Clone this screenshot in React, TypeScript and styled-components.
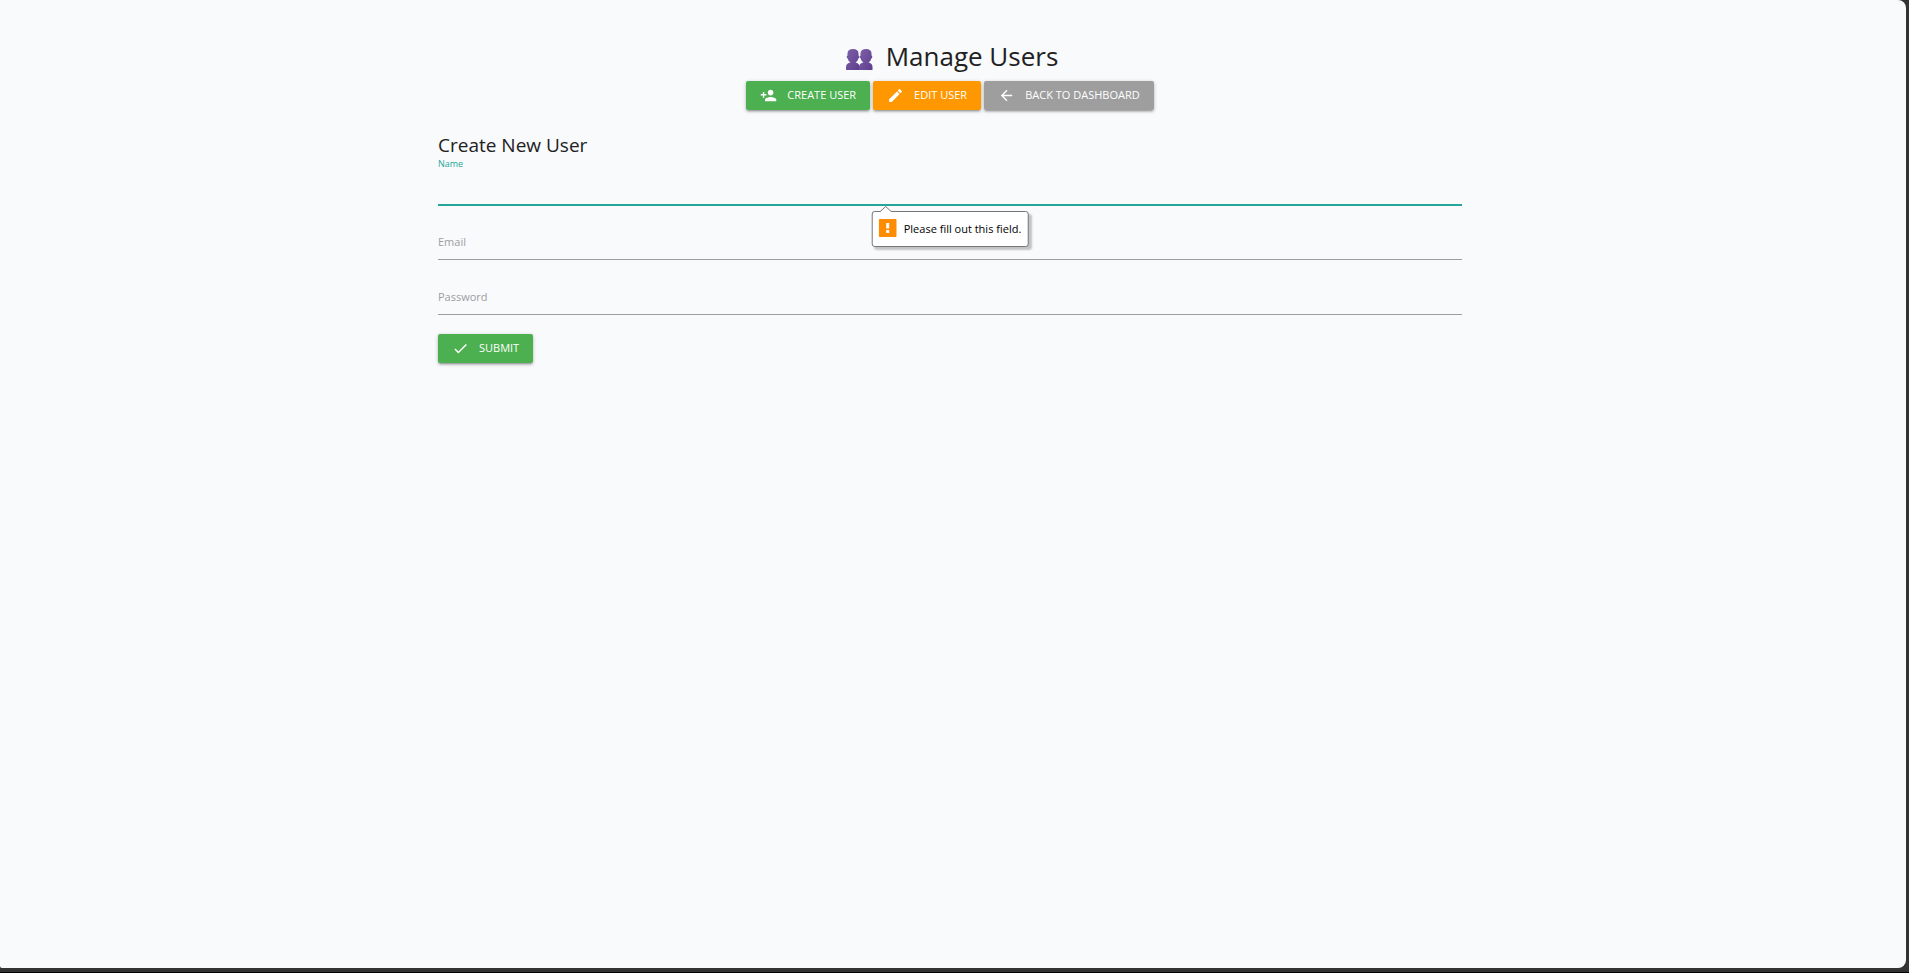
import React from "react";
import styled, { createGlobalStyle, css } from "styled-components";
import { MdPersonAdd, MdEdit, MdArrowBack, MdCheck } from "react-icons/md";

const GlobalStyle = createGlobalStyle`
  *, *::before, *::after { box-sizing: border-box; }
  body {
    margin: 0;
    background: #333333;
    color: #212121;
    font-family: "Open Sans", "Noto Sans", sans-serif;
  }
`;

const Frame = styled.div`
  display: flex;
  min-height: 100vh;
  padding: 0 3px 4px 0;
  border-bottom: 1px solid #000000;
`;

const Page = styled.main`
  flex: 1;
  padding: 40px 6px 40px 0;
  border-radius: 0 8px 8px 2px;
  background: #f8fafc;
`;

const Container = styled.div`
  width: 70%;
  max-width: 1024px;
  margin: 0 auto;
`;

const Title = styled.h1`
  display: flex;
  justify-content: center;
  align-items: center;
  gap: 13px;
  margin: 0 0 9px;
  padding-left: 4px;
  font-size: 26px;
  font-weight: 400;
  line-height: 32px;
`;

const TitleIcon = styled.svg`
  width: 27px;
  height: 21px;
  margin-top: 7px;
`;

const Toolbar = styled.div`
  display: flex;
  flex-wrap: wrap;
  justify-content: center;
  gap: 3px;
`;

const tones = { green: "#4caf50", orange: "#ff9800", grey: "#9e9e9e" };

const Button = styled.button<{ $tone: keyof typeof tones }>`
  display: inline-flex;
  align-items: center;
  gap: 10px;
  height: 29px;
  padding: 0 14px 1px;
  border: 0;
  border-radius: 2px;
  background: ${({ $tone }) => tones[$tone]};
  box-shadow: 0 2px 2px rgba(0, 0, 0, 0.14), 0 3px 1px -2px rgba(0, 0, 0, 0.12),
    0 1px 4px rgba(0, 0, 0, 0.2);
  color: #ffffff;
  font-family: inherit;
  font-size: 11px;
  line-height: 16px;
  text-transform: uppercase;
  cursor: pointer;

  svg {
    width: 17px;
    height: 17px;
  }
`;

const Form = styled.form`
  margin-top: 23px;
`;

const FormTitle = styled.h2`
  margin: 0;
  font-size: 19px;
  font-weight: 400;
  line-height: 24px;
`;

const Label = styled.label`
  font-size: 11px;
  line-height: 16px;
  color: #9e9e9e;
`;

const Input = styled.input`
  width: 100%;
  height: 35px;
  padding: 0;
  border: 0;
  border-bottom: 1px solid #9e9e9e;
  border-radius: 0;
  outline: none;
  background: transparent;
  font-family: inherit;
  font-size: 13px;
`;

const Field = styled.div<{ $active?: boolean }>`
  position: relative;
  display: grid;
  ${({ $active }) =>
    $active
      ? css`
          padding-top: 1px;
          ${Label} {
            font-size: 9px;
            line-height: 12px;
            color: #26a69a;
          }
          ${Input} {
            border-color: #26a69a;
            box-shadow: 0 1px 0 #26a69a;
          }
        `
      : css`
          margin-top: 20px;
          align-items: center;
          ${Label}, ${Input} {
            grid-area: 1 / 1;
          }
          ${Label} {
            padding-bottom: 1px;
            pointer-events: none;
          }
        `}
`;

const Hint = styled.div`
  position: absolute;
  top: calc(100% + 6px);
  left: 50%;
  z-index: 1;
  display: flex;
  align-items: center;
  gap: 7px;
  height: 36px;
  padding: 0 6px;
  border: 1px solid #767676;
  border-radius: 3px;
  background: #ffffff;
  box-shadow: 3px 3px 2px rgba(0, 0, 0, 0.22);
  color: #000000;
  font-size: 11px;
  line-height: 16px;
  white-space: nowrap;
  transform: translateX(-50%);
`;

const HintArrow = styled.svg`
  position: absolute;
  top: -6px;
  left: 7px;
  width: 12px;
  height: 6px;
`;

const HintIcon = styled.svg`
  width: 18px;
  height: 18px;
  margin-bottom: 2px;
`;

const Actions = styled.div`
  margin-top: 19px;
`;

export default function App() {
  return (
    <>
      <GlobalStyle />
      <Frame>
        <Page>
          <Container>
            <Title>
              <TitleIcon viewBox="0 0 27 21" aria-hidden="true">
                <defs>
                  <linearGradient id="bust" x1="0" y1="0" x2="1" y2="1">
                    <stop offset="0" stopColor="#7e62a8" />
                    <stop offset="1" stopColor="#5f3c8e" />
                  </linearGradient>
                  <path
                    id="person"
                    d="M1.500 4.500C1.500 1.500 3.500 0 7 0s5.500 1.500 5.500 4.500V6.500c1.100 0 1.100 2.700-.2 3-.4 2-1.500 3.200-2.800 4 2.500.5 4 1.800 4 4.500v3H0v-3c0-2.700 1.700-4 4.500-4.500-1.300-.8-2.400-2-2.800-4C.4 9.200.4 6.500 1.500 6.500z"
                  />
                </defs>
                <g fill="url(#bust)">
                  <use href="#person" />
                  <use href="#person" x="13" />
                </g>
              </TitleIcon>
              Manage Users
            </Title>
            <Toolbar>
              <Button type="button" $tone="green">
                <MdPersonAdd aria-hidden="true" />
                Create User
              </Button>
              <Button type="button" $tone="orange">
                <MdEdit aria-hidden="true" />
                Edit User
              </Button>
              <Button type="button" $tone="grey">
                <MdArrowBack aria-hidden="true" />
                Back to Dashboard
              </Button>
            </Toolbar>
            <Form noValidate onSubmit={(event) => event.preventDefault()}>
              <FormTitle>Create New User</FormTitle>
              <Field $active>
                <Label htmlFor="name">Name</Label>
                <Input id="name" type="text" required aria-describedby="name-hint" />
                <Hint id="name-hint" role="alert">
                  <HintArrow viewBox="0 0 12 6" aria-hidden="true">
                    <path d="M0 6L6 0.500L12 6" fill="#ffffff" stroke="#767676" />
                  </HintArrow>
                  <HintIcon viewBox="0 0 18 18" aria-hidden="true">
                    <rect width="18" height="18" rx="1" fill="#ff8c00" />
                    <path d="M7.500 4h3v5.500h-3zM7.500 11h3v3h-3z" fill="#ffffff" />
                  </HintIcon>
                  Please fill out this field.
                </Hint>
              </Field>
              <Field>
                <Label htmlFor="email">Email</Label>
                <Input id="email" type="email" required />
              </Field>
              <Field>
                <Label htmlFor="password">Password</Label>
                <Input id="password" type="password" required />
              </Field>
              <Actions>
                <Button type="submit" $tone="green">
                  <MdCheck aria-hidden="true" />
                  Submit
                </Button>
              </Actions>
            </Form>
          </Container>
        </Page>
      </Frame>
    </>
  );
}
